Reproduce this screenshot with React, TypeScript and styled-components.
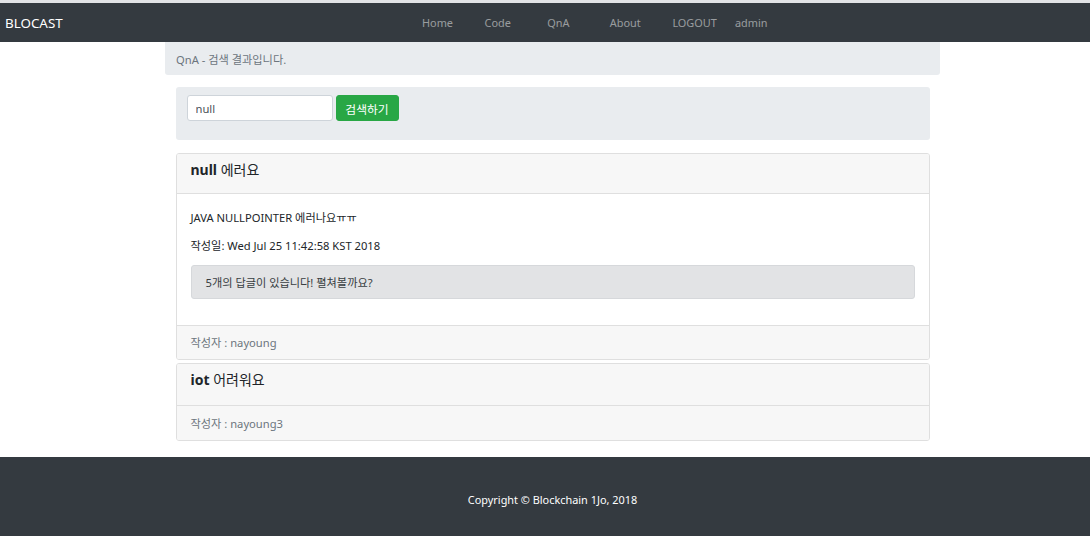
import React from "react";
import styled, { createGlobalStyle } from "styled-components";

const GlobalStyle = createGlobalStyle`
  html, body { margin: 0; padding: 0; background: #fff; }
  body {
    font-family: "Noto Sans", "Noto Sans CJK KR", sans-serif;
    font-size: 11.2px;
    line-height: 1.5;
    color: #212529;
  }
  * { box-sizing: border-box; }
`;

const TopStrip = styled.div`
  height: 3px;
  background: #e2e3e6;
`;

const Navbar = styled.nav`
  display: flex;
  align-items: center;
  height: 39px;
  padding: 2px 5px 0;
  background: #343a40;
`;

const Brand = styled.a`
  color: #fff;
  font-size: 13.4px;
  text-decoration: none;
  width: 57px;
  white-space: nowrap;
`;

const NavList = styled.ul`
  display: flex;
  list-style: none;
  margin: 0 0 0 360px;
  padding: 0;
`;

const NavItem = styled.li<{ $w?: number }>`
  width: ${(p) => (p.$w ? `${p.$w}px` : "62.6px")};
  color: rgba(255, 255, 255, 0.5);
  font-size: 10.9px;
  white-space: nowrap;
`;

const Main = styled.main`
  padding-left: 15px;
`;

const Breadcrumb = styled.div`
  width: 775px;
  margin: 0 auto;
  height: 33px;
  padding: 3px 11px 0;
  display: flex;
  align-items: center;
  background: #e9ecef;
  color: #6c757d;
  border-radius: 0 0 3px 3px;
  font-size: 11.2px;
`;

const Section = styled.div`
  width: 754px;
  margin: 0 auto;
`;

const SearchBox = styled.form`
  margin-top: 12px;
  height: 53px;
  padding: 8px 11px;
  background: #e9ecef;
  border-radius: 3px;
  display: flex;
  align-items: flex-start;
  gap: 3px;
`;

const Input = styled.input`
  width: 146px;
  height: 26px;
  border: 1px solid #ced4da;
  border-radius: 3px;
  padding: 1px 8px 0;
  font-family: inherit;
  font-size: 11.2px;
  color: #495057;
  background: #fff;
  outline: none;
`;

const Button = styled.button`
  width: 63px;
  height: 26px;
  border: 1px solid #28a745;
  border-radius: 3px;
  background: #28a745;
  color: #fff;
  font-family: inherit;
  font-size: 11.8px;
  padding: 1px 0 0;
`;

const Cards = styled.div`
  margin-top: 13px;
  display: flex;
  flex-direction: column;
  gap: 3px;
`;

const Card = styled.div`
  border: 1px solid #dfdfdf;
  border-radius: 3px;
  overflow: hidden;
  background: #fff;
`;

const CardHeader = styled.div<{ $tall?: boolean }>`
  background: #f7f7f7;
  border-bottom: 1px solid #dfdfdf;
  padding: 8.4px 14px ${(p) => (p.$tall ? "10px" : "8.4px")};
  height: ${(p) => (p.$tall ? "42px" : "40px")};
`;

const Title = styled.h5`
  margin: 0;
  font-size: 14px;
  font-weight: 400;
  line-height: 1.2;
  color: #212529;
  b { font-weight: 700; }
`;

const CardBody = styled.div`
  padding: 16px 14px 12px;
  height: 131px;
`;

const Para = styled.p`
  margin: 0 0 11.2px;
  line-height: 16.8px;
`;

const Alert = styled.div`
  height: 34px;
  margin-top: -1px;
  padding: 3px 14px 0;
  display: flex;
  align-items: center;
  background: #e2e3e5;
  border: 1px solid #d6d8db;
  border-radius: 3px;
  color: #383d41;
`;

const CardFooter = styled.div<{ $top?: boolean }>`
  background: #f7f7f7;
  ${(p) => (p.$top ? "border-top: 1px solid #dfdfdf;" : "")}
  height: 34px;
  padding: 2px 14px 0;
  display: flex;
  align-items: center;
  color: #6c757d;
`;

const Footer = styled.footer`
  margin-top: 16px;
  background: #343a40;
  height: 90px;
  padding: 35px 0 0 15px;
  text-align: center;
  color: #fff;
  font-size: 10.9px;
  line-height: 16px;
`;

export default function App() {
  return (
    <>
      <GlobalStyle />
      <TopStrip />
      <Navbar>
        <Brand>BLOCAST</Brand>
        <NavList>
          <NavItem>Home</NavItem>
          <NavItem>Code</NavItem>
          <NavItem>QnA</NavItem>
          <NavItem>About</NavItem>
          <NavItem>LOGOUT</NavItem>
          <NavItem $w={40}>admin</NavItem>
        </NavList>
      </Navbar>
      <Main>
        <Breadcrumb>QnA - 검색 결과입니다.</Breadcrumb>
        <Section>
          <SearchBox onSubmit={(e) => e.preventDefault()}>
            <Input defaultValue="null" />
            <Button type="submit">검색하기</Button>
          </SearchBox>
          <Cards>
            <Card>
              <CardHeader>
                <Title>
                  <b>null</b> 에러요
                </Title>
              </CardHeader>
              <CardBody>
                <Para>JAVA NULLPOINTER 에러나요ㅠㅠ</Para>
                <Para>작성일: Wed Jul 25 11:42:58 KST 2018</Para>
                <Alert>5개의 답글이 있습니다! 펼쳐볼까요?</Alert>
              </CardBody>
              <CardFooter $top>작성자 : nayoung</CardFooter>
            </Card>
            <Card>
              <CardHeader $tall>
                <Title>
                  <b>iot</b> 어려워요
                </Title>
              </CardHeader>
              <CardFooter>작성자 : nayoung3</CardFooter>
            </Card>
          </Cards>
        </Section>
      </Main>
      <Footer>Copyright © Blockchain 1Jo, 2018</Footer>
    </>
  );
}
